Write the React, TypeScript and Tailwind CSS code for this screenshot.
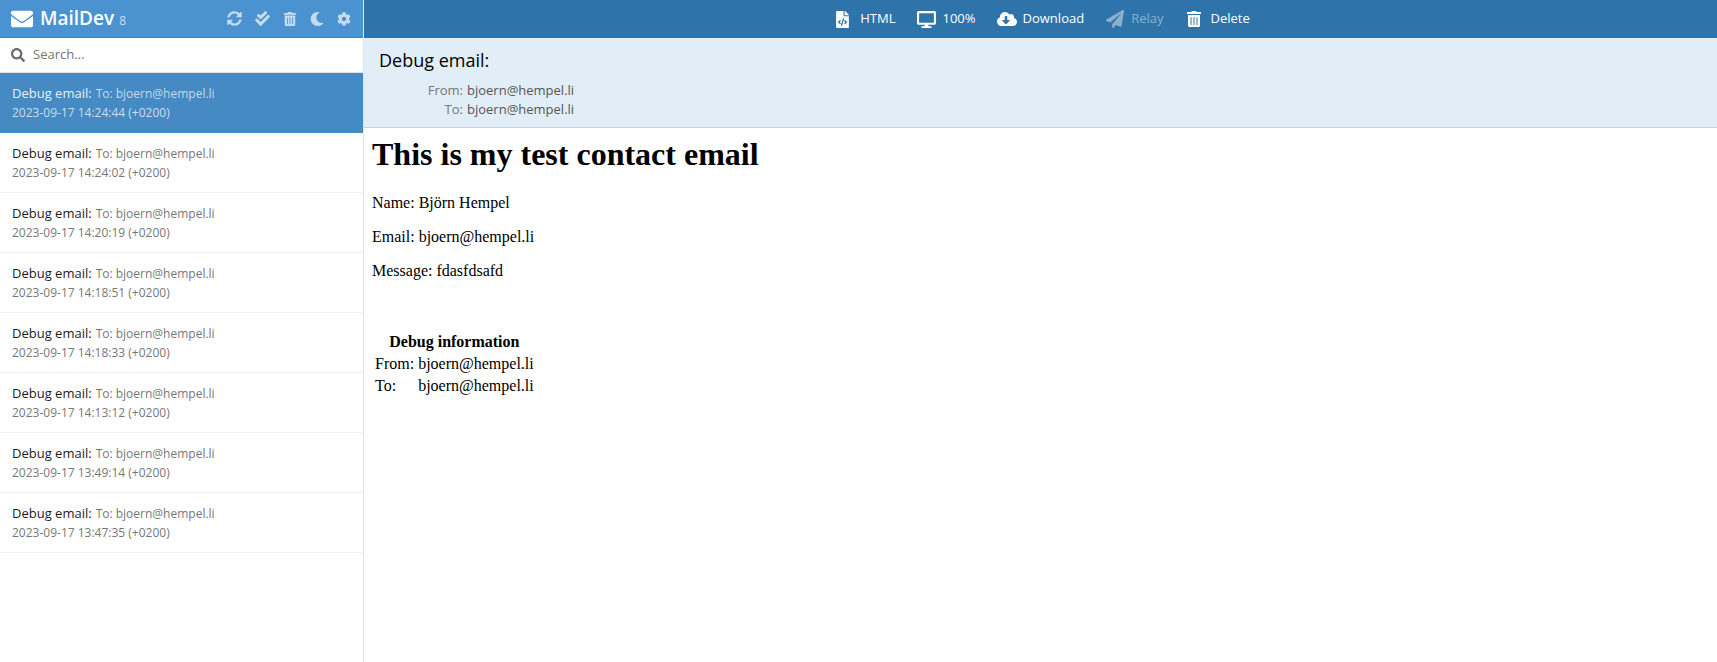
import React from 'react';
import { FaEnvelope, FaSyncAlt, FaCheckDouble, FaTrashAlt, FaMoon, FaCog, FaSearch, FaFileCode, FaDesktop, FaCloudDownloadAlt, FaPaperPlane } from 'react-icons/fa';

const emails = [
  '2023-09-17 14:24:44 (+0200)',
  '2023-09-17 14:24:02 (+0200)',
  '2023-09-17 14:20:19 (+0200)',
  '2023-09-17 14:18:51 (+0200)',
  '2023-09-17 14:18:33 (+0200)',
  '2023-09-17 14:13:12 (+0200)',
  '2023-09-17 13:49:14 (+0200)',
  '2023-09-17 13:47:35 (+0200)',
];

export default function App() {
  return (
    <div className="flex h-[662px] w-full overflow-hidden bg-white font-['Open_Sans',sans-serif] text-[13px]">
      {/* ── Sidebar ── */}
      <aside className="flex w-[364px] shrink-0 flex-col border-r border-[#dfe7ee]">
        <header className="flex h-[38px] shrink-0 items-center justify-between border-b border-[#3f82ba] bg-[#4a93d0] pl-[11px] pr-[12px] text-white">
          <div className="flex items-center">
            <FaEnvelope size={22} />
            <span className="ml-[7px] text-[19px] font-semibold">MailDev</span>
            <span className="ml-[5px] mt-[4px] text-[12px] text-[#c9dff1]">8</span>
          </div>
          <div className="flex items-center gap-[13px] text-[#c5dcf0]">
            <FaSyncAlt size={15} />
            <FaCheckDouble size={15} />
            <FaTrashAlt size={14} />
            <FaMoon size={14} />
            <FaCog size={14} />
          </div>
        </header>

        <div className="flex h-[35px] shrink-0 items-center border-b border-[#dde1e6] pl-[11px]">
          <FaSearch size={14} className="text-[#6b6b6b]" />
          <span className="ml-[8px] text-[13px] text-[#757575]">Search...</span>
        </div>

        {emails.map((date, i) => (
          <div
            key={date}
            className={`flex h-[60px] shrink-0 flex-col justify-center pl-[12px] ${i === 0 ? 'bg-[#458ac2] text-white' : 'border-b border-[#eff1f3] text-black'}`}
          >
            <div className="flex items-baseline leading-[19px]">
              <span className={i === 0 ? 'text-[#e8f1f8]' : 'text-[#1c1c1c]'}>Debug email:</span>
              <span className={`ml-[4px] text-[12px] ${i === 0 ? 'text-[#c3d9eb]' : 'text-[#777777]'}`}>To: bjoern@hempel.li</span>
            </div>
            <div className={`text-[12px] leading-[19px] ${i === 0 ? 'text-[#c9deee]' : 'text-[#777777]'}`}>{date}</div>
          </div>
        ))}
      </aside>

      {/* ── Main ── */}
      <main className="flex min-w-0 flex-1 flex-col">
        <nav className="flex h-[38px] shrink-0 items-center justify-center bg-[#2e74ab] pl-[3px] text-white">
          <div className="flex items-center">
            <FaFileCode size={17} />
            <span className="ml-[9px]">HTML</span>
          </div>
          <div className="ml-[21px] flex items-center">
            <FaDesktop size={19} />
            <span className="ml-[7px]">100%</span>
          </div>
          <div className="ml-[21px] flex items-center">
            <FaCloudDownloadAlt size={20} />
            <span className="ml-[6px]">Download</span>
          </div>
          <div className="ml-[22px] flex items-center text-[#8bb0ce]">
            <FaPaperPlane size={18} />
            <span className="ml-[7px]">Relay</span>
          </div>
          <div className="ml-[23px] flex items-center">
            <FaTrashAlt size={16} />
            <span className="ml-[8px]">Delete</span>
          </div>
        </nav>

        <section className="h-[90px] shrink-0 border-b border-[#bdd4e7] bg-[#e1edf7] pl-[15px]">
          <h2 className="pt-[9px] text-[18px] leading-[26px] text-black">Debug email:</h2>
          <div className="mt-[8px] grid grid-cols-[84px_auto] justify-start gap-x-[4px] leading-[19px] text-[#555555]">
            <span className="text-right text-[#777777]">From:</span>
            <span>bjoern@hempel.li</span>
            <span className="text-right text-[#777777]">To:</span>
            <span>bjoern@hempel.li</span>
          </div>
        </section>

        <article className="px-[8px] py-[8px] font-['Liberation_Serif',serif] text-[16px] leading-[18px] text-black">
          <h1 className="text-[32px] font-bold leading-[37px]">This is my test contact email</h1>
          <p className="mt-[21px]">Name: Björn Hempel</p>
          <p className="mt-[16px]">Email: bjoern@hempel.li</p>
          <p className="mt-[16px]">Message: fdasfdsafd</p>
          <table className="mt-[50px] border-separate border-spacing-[2px]">
            <tbody>
              <tr>
                <th colSpan={2} className="p-[1px] text-center font-bold">Debug information</th>
              </tr>
              <tr>
                <td className="p-[1px]">From:</td>
                <td className="p-[1px]">bjoern@hempel.li</td>
              </tr>
              <tr>
                <td className="p-[1px]">To:</td>
                <td className="p-[1px]">bjoern@hempel.li</td>
              </tr>
            </tbody>
          </table>
        </article>
      </main>
    </div>
  );
}
